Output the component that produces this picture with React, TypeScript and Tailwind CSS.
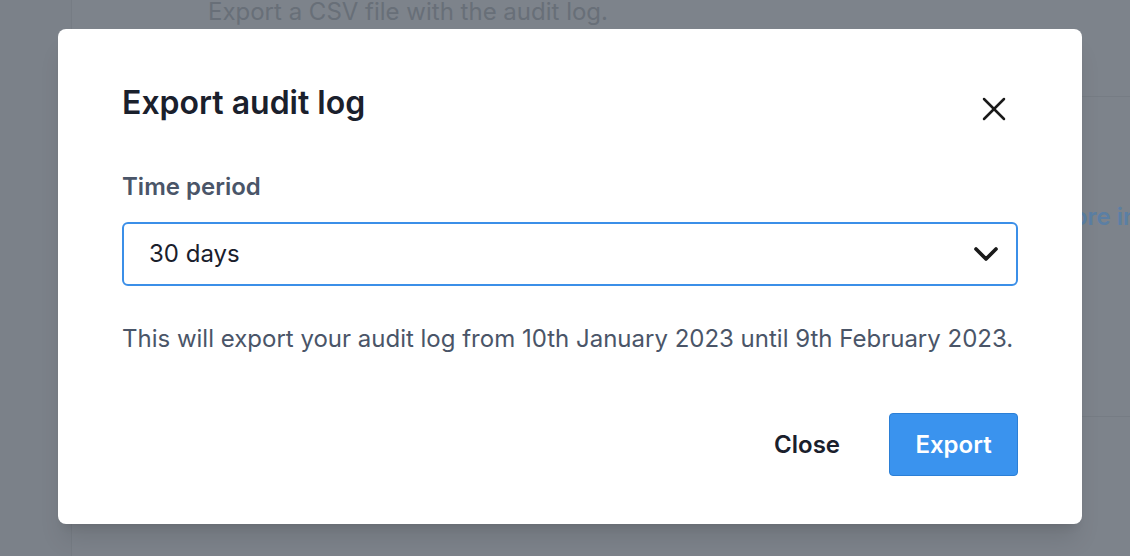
import { X, ChevronDown } from 'lucide-react'

function Background() {
  return (
    <div className="flex h-[556px] w-full overflow-hidden bg-[#7d838b]">
      <aside className="w-[72px] shrink-0 border-r border-[#767c84] bg-[#7b8189]" />
      <main className="flex min-w-0 flex-1 flex-col">
        <div className="h-[96px]">
          <p className="pl-[136px] text-[24px] leading-[24px] text-[#686f78]">Export a CSV file with the audit log.</p>
        </div>
        <div className="h-[1px] bg-[#767c84]" />
        <div className="h-[319px] pt-[104px]">
          <span className="whitespace-nowrap pl-[907px] text-[24px] font-semibold leading-[32px] text-[#5b7fa4]">
            Learn more info
          </span>
        </div>
        <div className="h-[1px] bg-[#767c84]" />
      </main>
    </div>
  )
}

export default function App() {
  return (
    <div className="relative h-[556px] w-[1130px] overflow-hidden font-['Inter',sans-serif]">
      <Background />
      <div className="absolute inset-0 pl-[58px] pt-[29px]">
        <div className="flex w-[1024px] flex-col rounded-lg bg-white px-16 pb-12 pt-[54px] shadow-xl">
          <div className="flex items-start justify-between">
            <h2 className="text-[32px] font-semibold leading-[40px] text-[#1a202c]">Export audit log</h2>
            <button type="button" className="mr-[4px] mt-[6px] text-[#1a1a1a]">
              <X size={40} strokeWidth={1.5} />
            </button>
          </div>

          <label className="mt-[42px] text-[24px] font-semibold leading-[32px] text-[#4a5568]">Time period</label>
          <div className="mt-[19px] flex h-[64px] items-center justify-between rounded-md border-2 border-[#3b8fe8] pl-[25px] pr-[10px]">
            <span className="text-[24px] leading-[32px] text-[#1a202c]">30 days</span>
            <ChevronDown size={40} strokeWidth={2.2} className="text-[#1a1a1a]" />
          </div>

          <p className="mt-[37px] text-[24px] leading-[32px] text-[#4a5568]">
            This will export your audit log from 10th January 2023 until 9th February 2023.
          </p>

          <div className="mt-[58px] flex items-center justify-end gap-[49px]">
            <button type="button" className="text-[24px] font-semibold leading-[32px] text-[#1a202c]">
              Close
            </button>
            <button
              type="button"
              className="h-[63px] w-[129px] rounded border border-[#2b7fd6] bg-[#3a93ee] text-[24px] font-semibold leading-[32px] text-white"
            >
              Export
            </button>
          </div>
        </div>
      </div>
    </div>
  )
}
